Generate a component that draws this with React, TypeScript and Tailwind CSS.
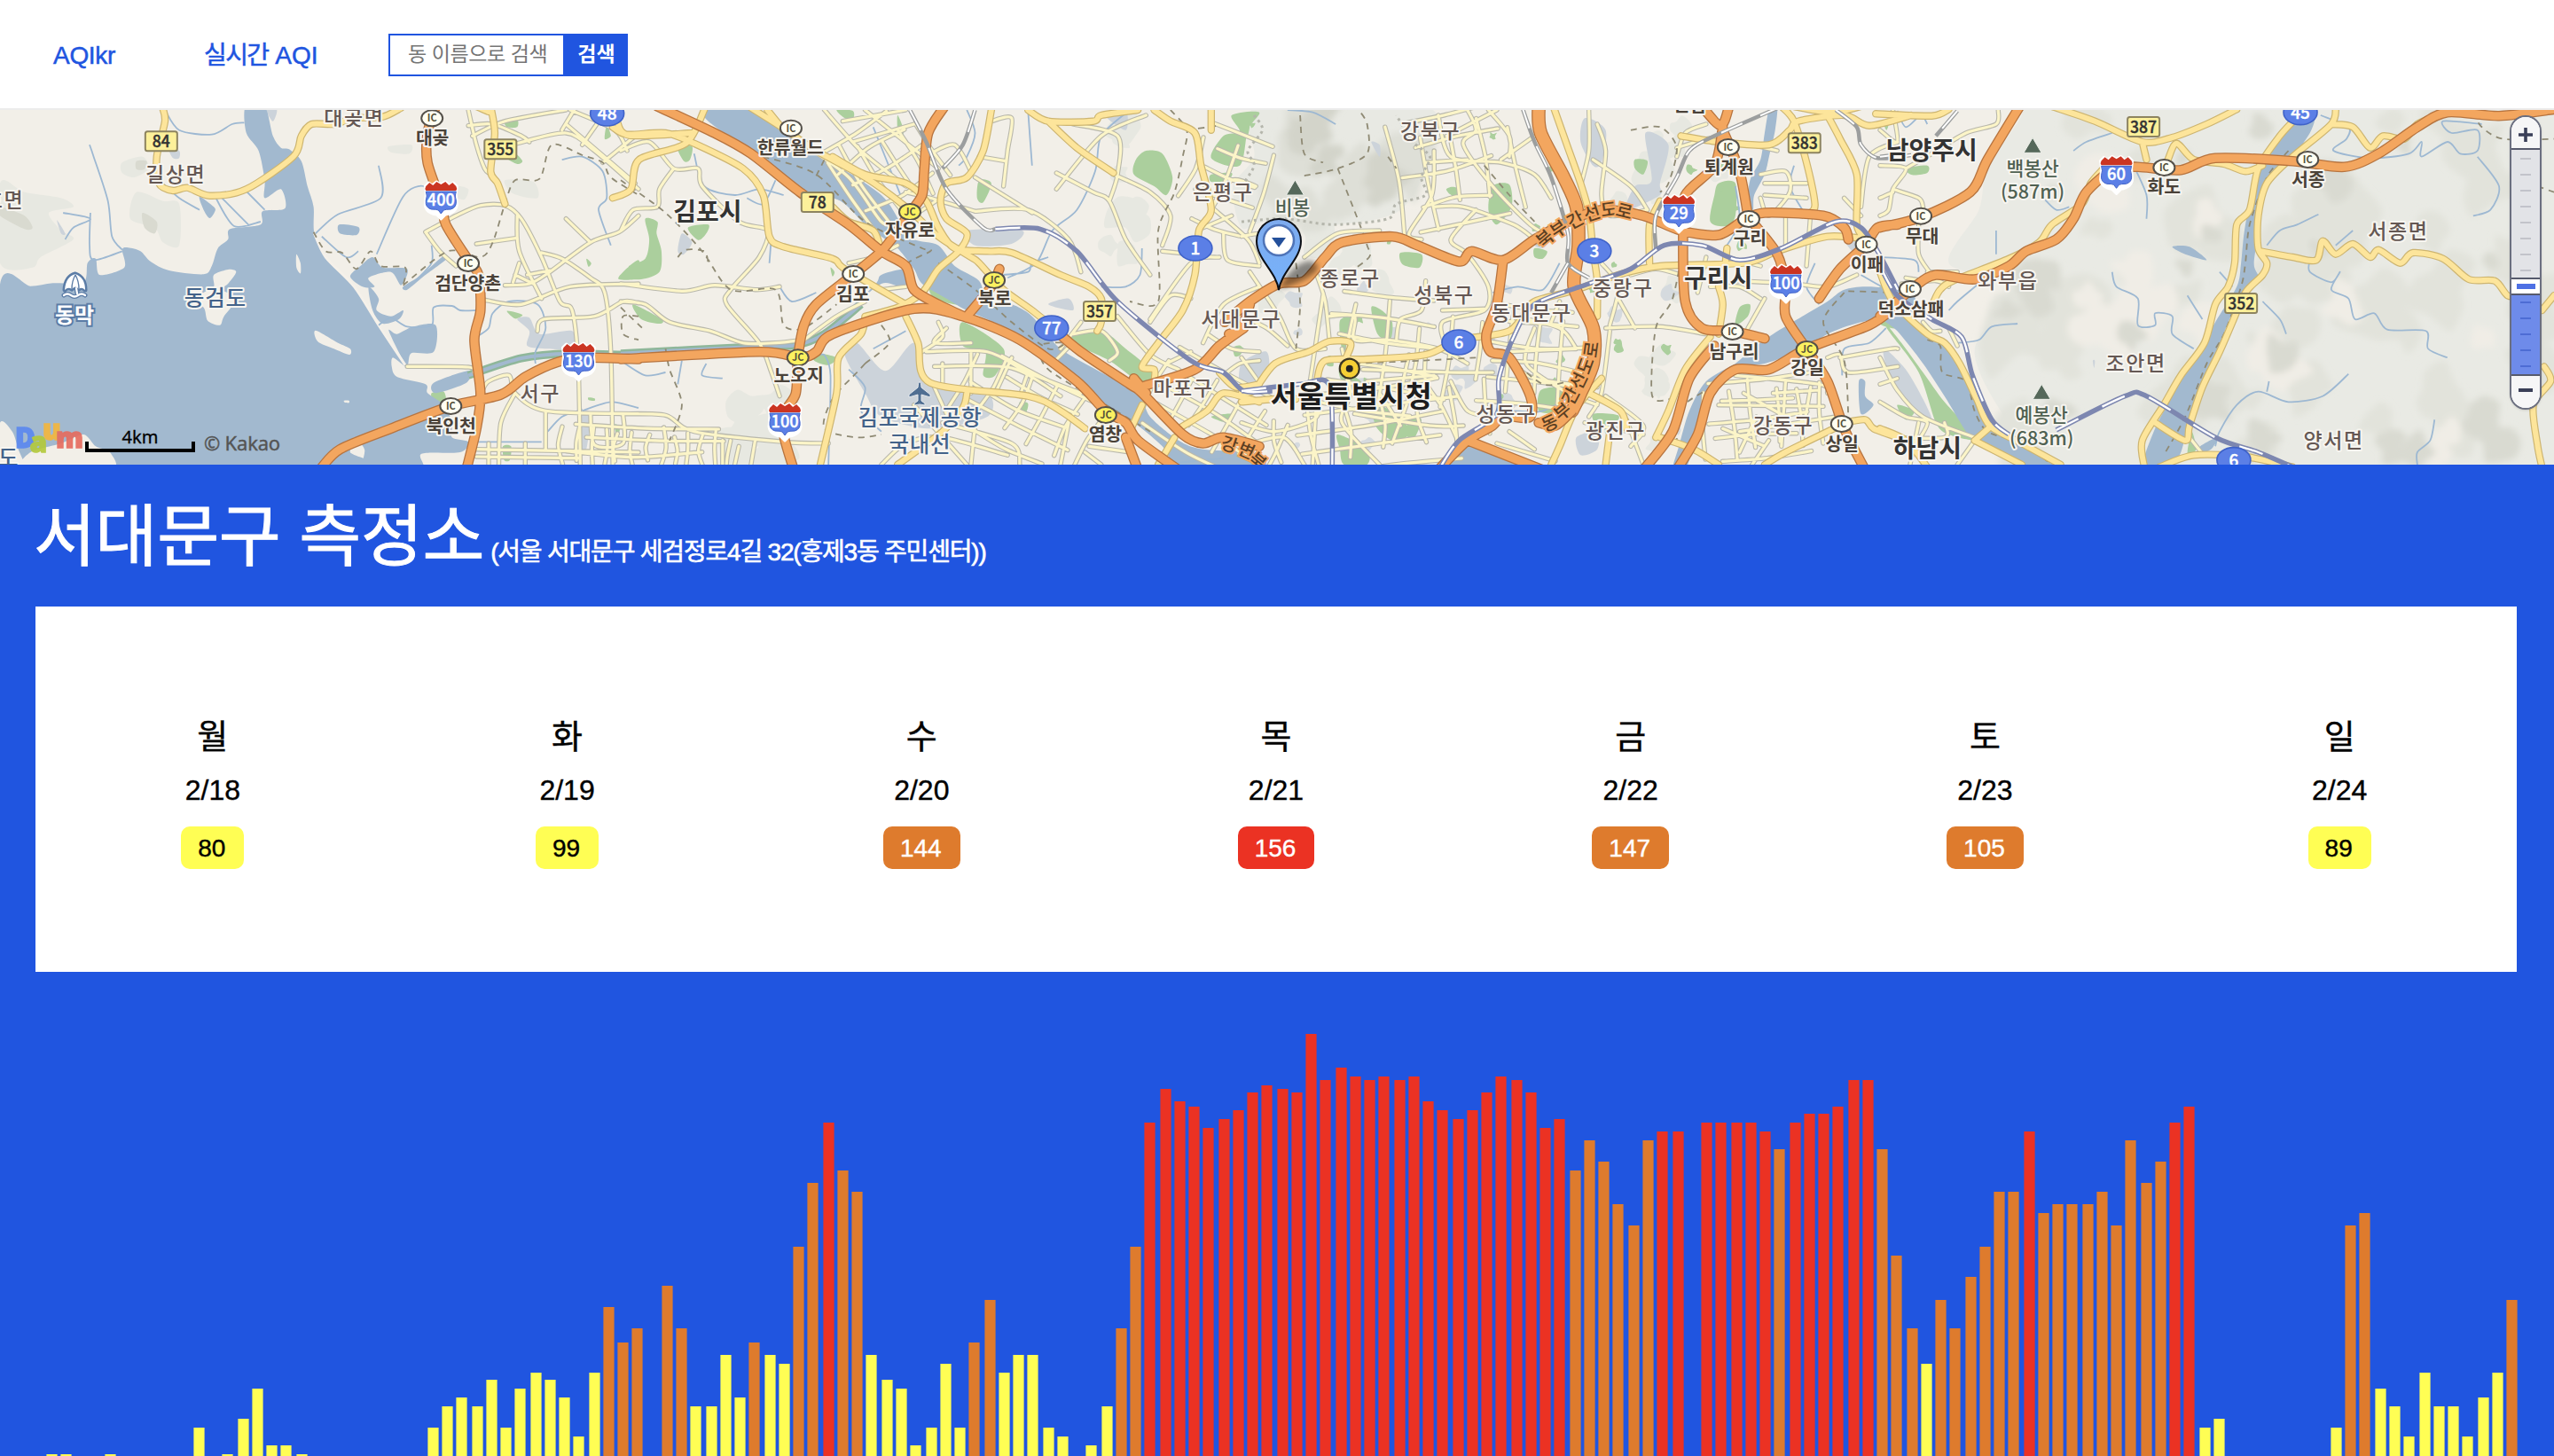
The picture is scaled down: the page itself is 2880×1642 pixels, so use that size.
import React from "react";

type Pt = [number, number];
type Tile = 0 | 1 | 2 | 3;

/* Survey sheets: horizontal origin and horizontal scale of each sheet on the map plane. */
const SHEETS: { x: number; s: number }[] = [
  { x: 0, s: 720 / 1568 },
  { x: 700, s: 720 / 1568 },
  { x: 1400, s: 740 / 1568 },
  { x: 2120, s: 760 / 1568 },
];

const px = (t: Tile, x: number) => SHEETS[t].x + x * SHEETS[t].s;
const py = (y: number) => 110 + y / 3;

const points = (t: Tile, src: string): Pt[] =>
  src
    .trim()
    .split(/\s+/)
    .map((p) => {
      const [x, y] = p.split(",").map(Number);
      return [px(t, x), py(y)] as Pt;
    });

const f = (n: number) => n.toFixed(1);

function curve(p: Pt[], closed = false): string {
  const n = p.length;
  const at = (i: number) => (closed ? p[(i + n) % n] : p[Math.max(0, Math.min(n - 1, i))]);
  let d = `M${f(p[0][0])} ${f(p[0][1])}`;
  for (let i = 0; i < (closed ? n : n - 1); i++) {
    const [a, b, c, e] = [at(i - 1), at(i), at(i + 1), at(i + 2)];
    d += `C${f(b[0] + (c[0] - a[0]) / 7)} ${f(b[1] + (c[1] - a[1]) / 7)} ${f(c[0] - (e[0] - b[0]) / 7)} ${f(
      c[1] - (e[1] - b[1]) / 7
    )} ${f(c[0])} ${f(c[1])}`;
  }
  return closed ? d + "Z" : d;
}

const line = (t: Tile, lines: string[]) => lines.map((l) => curve(points(t, l))).join("");
const area = (t: Tile, areas: string[]) => areas.map((a) => curve(points(t, a), true)).join("");

function rng(seed: number) {
  let s = seed;
  return () => {
    s = (s * 1664525 + 1013904223) % 4294967296;
    return s / 4294967296;
  };
}

function blobs(seed: number, count: number, x0: number, y0: number, x1: number, y1: number, r0: number, r1: number) {
  const r = rng(seed);
  let d = "";
  for (let i = 0; i < count; i++) {
    const cx = x0 + r() * (x1 - x0);
    const cy = y0 + r() * (y1 - y0);
    const rad = r0 + r() * (r1 - r0);
    const n = 9;
    const p: Pt[] = [];
    for (let k = 0; k < n; k++) {
      const q = rad * (0.45 + r() * 0.75);
      const a = (k / n) * Math.PI * 2;
      p.push([cx + Math.cos(a) * q, cy + Math.sin(a) * q]);
    }
    d += curve(p, true);
  }
  return d;
}

/* Irregular street lattice inside a rotated box. */
function lattice(cx: number, cy: number, w: number, h: number, deg: number, nx: number, ny: number, seed: number) {
  const r = rng(seed);
  const a = (deg * Math.PI) / 180;
  const at = (u: number, v: number): Pt => [
    cx + u * Math.cos(a) - v * Math.sin(a),
    cy + u * Math.sin(a) + v * Math.cos(a),
  ];
  let d = "";
  for (let i = 0; i <= nx; i++) {
    const u = -w / 2 + (w * i) / nx + (r() - 0.5) * 7;
    const s = -h / 2 + r() * h * 0.25;
    const e = h / 2 - r() * h * 0.25;
    d += curve([at(u, s), at(u + (r() - 0.5) * 9, (s + e) / 2), at(u + (r() - 0.5) * 9, e)]);
  }
  for (let j = 0; j <= ny; j++) {
    const v = -h / 2 + (h * j) / ny + (r() - 0.5) * 7;
    const s = -w / 2 + r() * w * 0.25;
    const e = w / 2 - r() * w * 0.25;
    d += curve([at(s, v), at((s + e) / 2, v + (r() - 0.5) * 9), at(e, v + (r() - 0.5) * 9)]);
  }
  return d;
}

const WATER =
  area(0, [
    "0,632 75,638 130,628 205,625 215,560 235,545 245,600 305,575 300,515 315,508 345,520 370,555 415,585 500,598 520,570 535,510 560,480 565,445 640,430 645,385 700,375 690,310 650,340 650,280 635,180 605,120 603,30 650,30 670,130 690,170 710,175 740,215 755,300 770,370 772,460 800,540 870,640 930,770 995,905 965,880 962,910 975,945 1045,970 1050,1000 1090,1040 1110,1100 1110,1150 1150,1165 1130,1200 1035,1205 1035,1260 900,1260 895,1190 870,1150 860,1200 880,1260 0,1260",
    "833,430 880,438 876,465 835,460",
    "490,335 525,370 528,385 515,408 500,380",
    "885,570 915,540 940,575 1000,580 985,635 960,590 905,610 920,640 890,640 860,605",
    "905,640 930,680 925,720 960,740 990,720 980,750 940,765 915,720",
    "1015,775 1070,770 1065,860 1010,865 998,905 955,790 975,800",
    "1065,965 1150,925 1145,965 1070,1000",
    "990,640 1035,600 1085,540 1095,548 1040,605 1000,650",
  ]) +
  area(1, [
    "205,30 215,80 320,180 400,260 460,320 540,350 600,430 640,470 680,510 720,580 740,630 800,680 850,720 960,790 1060,890 1140,970 1200,1050 1270,1110 1330,1180 1380,1260 1568,1260 1568,1205 1430,1190 1370,1160 1300,1080 1270,1000 1180,930 1080,850 1010,740 960,700 900,690 880,620 820,570 780,500 720,480 690,430 640,330 520,220 400,120 330,30",
    "640,600 700,580 720,610 690,640 640,630 560,720 500,790 620,640",
  ]) +
  area(2, [
    "490,1260 510,1190 550,1170 610,1190 720,1260",
    "1030,1260 1045,1180 1070,1060 1110,960 1180,900 1220,850 1270,800 1340,740 1400,690 1440,650 1500,640 1600,660 1600,730 1480,760 1400,800 1350,850 1250,900 1190,910 1140,970 1100,1100 1060,1260",
    "1262,30 1280,30 1275,110 1262,190 1250,260 1225,330 1222,380 1208,380 1215,280 1240,210 1250,120",
    "1475,960 1490,960 1490,1010 1510,1040 1480,1070",
  ]) +
  area(3, [
    "0,665 30,690 100,800 150,840 190,900 240,1020 250,1100 330,1180 420,1260 350,1260 260,1190 215,1160 150,1010 100,900 40,790 0,740",
    "960,80 1010,60 1000,120 950,220 900,300 885,420 870,560 880,610 850,660 810,760 790,850 760,960 720,1090 700,1200 670,1260 610,1260 640,1120 700,960 740,870 780,760 830,640 840,560 850,430 880,250 930,140",
    "745,1180 785,1150 770,1190 740,1205",
    "680,505 720,505 760,550 710,530",
  ]);

const ISLES = area(0, [
  "525,600 560,582 580,590 560,630 545,650 580,680 550,740 540,770 510,755 500,710 465,690 500,660 525,640",
  "775,788 830,830 860,850 858,870 820,850 780,825",
  "728,530 738,560 738,595 728,575",
  "0,1100 30,1130 45,1190 60,1260 -10,1260",
  "65,1250 75,1200 150,1170 205,1140 235,1180 270,1200 272,1260",
  "845,1025 857,1025 857,1033 846,1031",
]);

const STREAMS =
  line(0, [
    "220,160 230,200 265,350 275,470 300,515", "222,390 220,500 230,550 300,520", "155,390 222,410 180,440 160,480",
    "405,42 440,110 520,125 570,90 600,85", "400,290 440,340 490,380", "530,340 575,435 640,420", "545,340 610,430", "600,310 650,380",
    "775,460 830,395 935,340 930,230", "925,530 990,335 1040,300 1045,360", "790,470 850,540 880,520", "1060,500 1060,560 1020,620",
    "930,770 960,745 1000,775 1060,770 1065,710 1110,705 1130,720 1170,720", "1170,810 1200,780 1210,730 1250,690 1320,700 1340,780 1315,860 1315,900",
    "1380,210 1430,200 1480,250 1490,340 1470,380 1500,500", "1430,1060 1500,1030 1568,1050", "1345,1130 1380,1080 1430,1055", "1170,1165 1330,1165",
  ]) +
  line(1, [
    "180,190 205,300 280,330 340,310 400,330", "390,640 420,690 480,660", "500,870 515,940 510,1242", "440,860 500,870",
    "620,100 690,340", "850,42 870,120 850,200 830,230", "1010,230 1000,42", "1250,42 1180,130 1165,250 1120,380 1060,450 1020,560 950,610",
    "940,600 1000,590 1010,560 1050,540", "1280,510 1275,600 1240,640 1180,640", "0,890 60,940 110,930", "150,890 140,970", "210,900 200,940 250,950", "560,920 600,980 590,1060 640,1130",
    "620,850 700,790", "370,470 365,560", "310,340 350,360 380,280", "1340,1240 1480,1220",
  ]) +
  line(2, [
    "110,42 170,50 225,90", "650,1060 720,1060 800,1000", "1180,300 1190,420 1160,500", "1540,780 1500,830 1440,850 1435,940", "600,660 660,640 720,650 760,560", "1320,230 1310,300 1340,380", "1370,560 1350,640 1380,700",
    "1480,600 1530,640 1568,660",
  ]) +
  line(3, [
    "450,180 480,150 540,120", "590,230 620,330 620,410", "380,340 410,380 440,370", "1025,60 1090,100 1085,140 1055,180 1140,205 1230,190 1260,150 1260,200 1320,150 1350,190 1390,180 1390,110 1330,120 1310,80 1400,90",
    "1390,200 1440,300 1420,380 1380,400", "1020,395 970,430 930,450 900,500", "1100,450 1060,500", "1000,550 1000,590 1050,625 1070,590 1050,650 1090,680 1105,750 1150,730 1180,785 1270,790 1275,850 1320,880",
    "540,590 550,640 600,680 600,770 640,770 640,730 680,740 680,800 730,850", "890,690 930,750 945,800", "790,590 820,640", "320,765 260,775 230,820 180,830", "225,635 180,690 160,720",
    "1090,935 1030,1010 950,1030 880,995 830,1040 790,1130 780,1180", "905,960 900,995", "1290,1090 1280,1160 1250,1200 1250,1242", "270,450 270,530", "0,540 80,550 90,590", "40,45 60,100 95,60 110,90", "715,670 750,750",
  ]);

const PARKS =
  area(0, [
    "1240,80 1270,75 1270,100 1245,100", "1490,95 1500,130 1485,140", "1265,190 1283,215 1270,225 1245,205", "1530,590 1568,550 1568,610 1520,615", "1245,722 1283,735 1265,748",
    "1060,1000 1090,995 1095,1040 1065,1025", "1235,1180 1255,1180 1252,1226 1238,1226", "1510,1105 1522,1120 1515,1155", "1445,1015 1460,1018 1460,1026 1446,1024", "1440,545 1452,560 1445,572",
  ]) +
  area(1, [
    "60,410 90,420 88,460 100,520 95,590 50,615 0,610 30,590 20,570 60,545 70,480", "165,440 215,430 210,460 190,482", "140,170 175,165 170,210 155,215", "30,700 100,750 95,765 50,750", "840,760 940,850 920,940 890,940 895,860 840,840",
    "1100,820 1180,790 1240,850 1310,930 1300,960 1270,960 1200,890", "1290,180 1330,190 1355,270 1340,330 1310,300 1260,260 1265,210", "1500,60 1568,50 1540,110 1520,230 1450,205 1480,130 1520,115", "680,60 695,110 690,130 680,110", "880,280 910,290 890,355 875,340", "760,640 830,700 770,680",
    "480,865 530,880 510,905 475,890", "980,1030 1000,1035 995,1065 978,1060", "515,575 525,590 520,605", "1450,260 1500,255 1490,280 1450,285", "530,42 570,45 570,75 550,70", "1450,1080 1500,1070 1490,1100",
  ]) +
  area(2, [
    "0,60 20,70 15,130 0,140", "600,300 640,295 645,370 610,430 590,380", "1140,290 1180,290 1180,400 1160,435 1120,420 1130,330", "310,710 335,720 360,760 355,820 325,800", "235,755 265,750 260,840 240,850", "230,1140 300,1190 300,1242 245,1242 235,1190",
    "320,1040 380,1080 400,1140 360,1160 320,1110", "400,1080 430,1090 410,1160 395,1140", "715,990 770,985 750,1060 710,1060", "380,525 430,530 425,575 385,565", "940,210 970,215 960,260 940,240", "1190,710 1215,700 1210,740 1180,770", "1500,730 1568,740 1568,780 1530,770",
    "840,1070 900,1075 890,1110 850,1110", "1240,220 1255,230 1220,330 1215,300", "235,920 285,960 270,985 240,960", "700,510 730,520 720,545 700,540",
  ]) +
  area(3, [
    "0,740 50,830 100,930 150,1030 220,1140 220,1160 160,1140 130,1100 90,930 20,790", "700,960 715,960 705,1040 680,1060 680,1000", "60,240 110,230 110,255 75,262", "0,640 30,660 0,665", "725,1130 735,1190 715,1210", "6,80 20,85 15,110", "40,1040 80,1060 60,1090", "700,1060 710,1080 700,1120", "765,790 775,800 762,820",
  ]);

const GREY =
  area(1, ["580,830 650,925 720,830 760,960 900,1000 900,1080 760,1120 640,1080 600,1000 550,870", "850,450 985,450 960,495 870,500", "150,460 175,490 155,530 140,520", "1050,700 1100,680 1110,720", "1190,60 1240,42 1240,110", "1520,930 1568,890 1568,980 1530,985"]) +
  area(0, ["1325,800 1405,790 1410,850 1345,850 1295,840 1300,790 1270,750 1300,745", "415,175 440,180 440,205 425,205", "1430,1070 1450,1070 1440,1190 1425,1190", "140,415 160,460 150,460", "655,42 680,42 670,80"]) +
  area(2, ["965,120 1020,160 1000,290 1000,330 920,380 940,300 980,280", "820,70 870,110 860,220 840,230 810,150", "0,900 60,860 60,950 0,980", "310,150 330,160 330,200", "800,1150 850,1130 850,1190 810,1210", "700,460 740,470 720,510 690,490", "1430,460 1470,490 1460,520"]) +
  area(3, ["10,850 60,920 100,1020 120,1090 90,1080 50,1000 15,910", "495,890 500,890 498,915"]);

const STREETS =
  line(0, [
    "1045,455 1120,400 1180,365 1240,365 1280,410 1330,540 1375,690 1405,720 1420,900 1425,1242", "1045,455 1080,520 1120,570", "1170,495 1270,475", "1270,400 1275,520 1330,680", "1330,525 1380,545 1450,610 1485,660 1500,860 1505,1242",
    "1240,635 1300,630 1350,590 1450,490 1520,455 1568,400", "1260,625 1275,560", "1190,685 1280,700 1400,640 1568,630", "1320,790 1335,750 1460,740 1530,690 1568,695", "1000,910 1150,912 1165,930", "1185,990 1200,960 1250,940 1265,1000 1340,1060 1568,1070", "1265,1000 1230,1100 1225,1242",
    "1150,42 1170,160 1190,240 1205,260", "1160,130 1240,80 1390,42", "1270,155 1390,120 1460,180 1568,310", "1390,90 1560,290", "1380,110 1410,42", "1400,42 1510,110 1540,180", "1340,1065 1340,1190", "1150,95 1210,90 1280,130 1300,150", "1430,160 1490,42", "1390,410 1450,490", "1170,1190 1568,1200", "1170,1215 1420,1220", "1200,1170 1200,1242", "1290,1170 1290,1242",
    "1530,1070 1530,1170 1460,1175 1450,1070", "1560,130 1480,220", "1295,600 1350,585", "1265,600 1310,630",
  ]) +
  line(1, [
    "0,630 150,655 230,635 330,650 390,640", "0,180 70,150 130,240 190,240 200,300 290,420 360,450 340,540 270,650 260,700 340,830 370,930 390,1010", "130,240 95,310 90,370 30,380 0,450", "0,690 60,700 120,760 220,790 300,830 380,830 450,820",
    "0,1070 110,1075 180,1130 400,1165 510,1170", "450,820 530,740 600,690", "440,150 560,270 640,420 680,430", "500,42 590,180 700,300", "545,80 700,42", "700,320 760,340 870,385", "570,150 720,90", "600,42 780,240", "760,190 820,160 860,250", "870,385 1000,380 1100,480 1130,590",
    "870,270 1010,390", "880,200 945,215", "910,80 960,70 950,180 940,300", "1070,255 1160,320 1200,350 1240,480 1300,600", "1070,310 1180,130 1290,60", "1110,90 1220,130 1220,260 1200,350", "1210,260 1300,320 1350,400 1330,500", "780,760 790,810 740,860", "750,860 900,860 1000,930 1130,1000",
    "770,910 960,915 1080,1010", "790,900 790,980", "860,860 860,1000", "960,880 920,1000", "800,780 770,830 860,830", "1000,930 980,1010", "1300,750 1400,560 1470,540", "1220,740 1300,870 1370,920", "1300,760 1350,670 1400,680", "1110,800 1180,790 1220,860 1200,890", "1330,520 1400,530", "1430,830 1480,700 1568,640",
    "1440,800 1500,850 1568,860", "1450,370 1540,480 1568,560", "1430,440 1500,400", "1480,460 1490,550 1568,570", "1340,900 1400,860", "1480,940 1520,900 1568,890", "770,980 800,1070", "1080,850 1130,760", "1060,900 1110,830", "720,1040 850,1242", "790,1100 960,1170 980,1242", "1100,1100 1080,1242", "1140,1200 1180,1242", "1150,1180 1250,1200",
    "1560,300 1500,280 1450,380", "640,1242 700,1170 790,1150 950,1210", "870,1110 860,1242", "250,1160 250,1242", "330,1160 320,1242", "290,1180 280,1242", "560,560 620,540 680,500", "640,650 700,640",
  ]) +
  line(2, [
    "0,470 50,460 90,490", "20,590 90,740 130,850 200,850", "150,540 230,460 330,450", "180,600 200,690 210,820", "210,740 270,740 270,820 350,820 470,850 540,900", "0,740 60,780 110,840", "370,820 380,750 430,720 440,620", "470,60 500,200 620,220 700,260 740,340", "460,180 455,330 400,460 430,480",
    "540,42 560,110 530,160 600,300 690,430 740,470", "460,370 530,370 650,430 700,480", "440,220 540,210", "490,130 610,42", "590,42 640,130 640,200", "700,130 620,210", "850,90 870,180 860,330 880,400 970,380", "830,42 830,180 810,300", "840,210 930,300 970,380", "560,380 500,480 540,530 590,640 580,720 480,760 490,850",
    "480,720 580,715", "290,920 500,930 600,930", "300,960 460,940", "400,870 380,1000", "440,860 440,960 480,1050 520,1170", "240,850 260,1000 240,1100 330,1242", "330,1000 380,1110", "270,1070 450,1110 530,1110", "170,960 180,1080 80,1130 0,1100", "180,1000 170,1242", "410,980 360,1170", "0,1180 100,1150 150,1242", "500,960 540,1060 600,1080",
    "640,860 800,850", "700,780 680,900 780,1000 850,1040", "650,740 760,780 800,850", "870,780 1000,775 1110,800", "900,680 940,780", "860,560 900,640 880,770", "640,890 700,950 850,980", "880,790 860,1000 830,1080", "760,690 740,760", "820,1100 960,1140", "610,1170 750,1230", "640,1130 700,1190", "920,1090 960,1242", "870,1010 960,1110 930,1180",
    "1040,170 1110,140 1150,130", "1040,200 1060,120 1110,90", "1240,260 1300,250 1310,320 1260,400 1240,340", "1250,290 1350,290", "1250,330 1350,340", "1160,540 1240,570", "1180,620 1320,630 1400,640 1470,600", "1300,390 1300,500", "1360,390 1350,570", "1250,680 1210,780", "1120,640 1190,640 1240,680", "1140,1040 1390,1045", "1180,940 1380,970 1400,1000",
    "1270,1000 1380,990", "1300,960 1290,1180", "1360,980 1340,1140", "1190,1130 1420,1080", "1200,1000 1300,1080", "1400,880 1430,870 1450,930 1568,910", "1430,880 1550,850 1568,850", "1260,1160 1220,1242", "1230,1080 1190,1200", "1150,1120 1250,1180", "1480,370 1500,200 1568,150", "1440,340 1480,400", "1220,160 1280,180", "0,880 40,960", "930,600 990,580 1050,600", "1110,540 1090,660",
  ]) +
  line(3, [
    "0,400 20,380 30,310 60,240 0,230", "30,310 90,340 100,370", "90,430 90,530 115,590", "110,590 180,590", "50,630 130,620 160,640", "0,880 40,990 100,1080 220,1150", "0,1030 60,1080 110,1100 80,1180", "90,1100 70,1242", "220,1160 180,1242", "60,240 120,190 200,120 270,90 275,42", "0,110 40,150 30,42", "100,620 60,610", "0,340 30,320", "0,970 40,950", "30,1150 150,1150 150,1100", "160,780 180,840", "100,760 120,790 140,790", "720,1150 750,1205",
  ]) +
  lattice(730, 506, 190, 50, 2, 12, 3, 11) +
  lattice(1000, 192, 110, 110, 58, 4, 5, 5) +
  lattice(1560, 400, 150, 130, 8, 4, 5, 21) +
  lattice(1640, 190, 130, 130, -12, 4, 4, 31) +
  lattice(1560, 480, 240, 90, -8, 6, 4, 41) +
  lattice(1730, 400, 120, 110, 6, 4, 5, 51) +
  lattice(1385, 200, 80, 110, 20, 2, 4, 61) +
  lattice(1370, 470, 150, 90, 30, 5, 4, 71) +
  lattice(1160, 465, 160, 90, 28, 5, 4, 81) +
  lattice(1990, 470, 130, 90, -5, 5, 4, 91);

const YELLOW =
  line(0, [
    "398,30 405,80 385,200 390,290 425,315 460,305 515,332 605,310 720,200 740,130 765,90 820,90 870,70 940,65 985,35",
    "1205,30 1215,120 1205,250 1222,290 1240,360", "1170,30 1200,48", "1515,80 1545,128 1700,120",
  ]) +
  line(1, [
    "-20,100 15,125 110,120 180,155 300,240 350,330 365,470 400,505 520,545 550,580 700,700", "-20,340 25,310 45,210 160,155 205,42", "320,35 400,105 480,180 600,270 700,370 780,470 860,540 880,560 940,650 1010,720 1100,820", "360,42 400,110",
    "520,200 600,260 700,290 750,350 780,440 820,510 900,520 960,525 1080,600 1150,640 1180,680 1180,760 1170,790", "910,42 890,180 850,270 800,290 785,350 800,410 850,460 830,520 780,580 740,660 680,710 600,740", "1000,42 1050,80 1160,80 1180,60 1270,42", "1050,80 1120,170 1210,255",
    "1310,42 1350,80 1410,120 1425,230 1450,380 1420,450 1410,600 1380,720 1320,830 1280,910 1310,920 1310,960", "1450,42 1450,110", "600,740 590,800 535,880 530,1000 490,1242", "700,740 730,830 760,965 1000,1010 1080,1060 1140,1120", "850,1000 840,1050 790,1130 680,1242", "520,370 560,420 620,450 640,510 670,540",
    "1280,1040 1250,1130", "1370,1120 1440,1060 1480,1000 1568,1030", "1360,1150 1320,1242", "1470,930 1510,980 1568,970",
  ]) +
  line(2, [
    "0,1000 30,990 80,900 160,860 210,825 260,830 250,880", "180,960 200,890 300,885 440,870 520,820 640,790 690,700 720,680 800,650 900,600 1000,570 1200,560 1280,520 1400,470 1500,480", "745,30 780,170 810,290 830,390 840,520 850,620 850,740", "0,1030 80,1020 130,1020", "830,1000 905,1060 920,1120", "860,950 800,1050 760,1180 740,1242",
    "1120,810 1060,920 1020,1060 990,1150", "1000,1150 1080,1190 1140,1242", "1000,350 975,430 975,560", "1050,130 1140,150 1260,160 1310,110 1330,80 1440,60 1500,95 1600,60", "1290,30 1320,80 1350,220 1370,360 1360,390", "1400,60 1430,140 1470,260 1470,430 1490,480", "1320,30 1410,50 1480,30",
    "1430,1110 1300,1200 1250,1242", "1440,1100 1490,1090 1510,1120 1568,1150", "1140,640 1150,700 1140,800", "1160,510 1150,640", "880,1130 870,1242",
  ]) +
  line(3, [
    "-10,55 120,62 160,40", "400,30 500,80 610,150 680,135 760,90 830,40", "610,150 620,210", "670,210 690,155 730,210 800,225 850,250 890,230", "520,240 490,290 470,360 400,430 370,490 300,545 170,620 140,650 125,690", "0,590 30,690 110,800 150,830 185,900 225,1020 255,1110 330,1170 420,1242", "220,1160 330,1242", "220,1160 260,1110",
    "975,60 930,130 880,240 860,380 830,430 825,560 810,640 780,700 755,830 700,940 660,1040 610,1160 615,1250", "1060,30 1050,90 960,200 900,290 880,400 880,510 900,560 890,600 850,660 820,760 790,860 750,980 720,1110 710,1160 640,1100", "1050,90 1100,100 1140,170 1170,130 1220,140 1250,90 1300,60",
    "885,520 960,540 1015,550 1030,485 1060,530 1100,495 1140,540 1160,515 1210,560 1240,525 1310,545 1370,615 1430,620 1460,670 1490,670", "1540,720 1568,670", "1545,910 1560,960 1520,1040 1530,1180 1540,1250", "650,1250 730,1210 850,1215 960,1250", "0,1120 60,1160 110,1250",
  ]);

const EXPRESS = line(2, ["710,30 715,120 770,270 800,370 805,500 795,640 840,780 840,900 810,1000 790,1060"]);

const ORANGE =
  line(0, [
    "1070,30 1050,120 1050,220 1085,360 1095,430 1150,550 1175,600 1180,720 1165,820 1180,1000 1170,1120 1145,1260",
    "785,1260 835,1190 960,1120 1105,1045 1230,1005 1290,945 1370,895 1440,880 1568,885",
  ]) +
  line(1, [
    "0,885 340,860 440,880 480,860 520,800 720,715 840,740 980,820 1120,960 1190,1060 1240,1100 1270,1160 1370,1260",
    "90,30 230,120 320,190 440,320 560,430 640,520 700,570 720,650 780,700 850,745",
    "795,30 755,120 745,250 740,330 710,390 680,450 640,520 570,600 480,700 450,770 435,880 430,1000 405,1060 400,1140 425,1260",
    "930,580 910,640 850,740", "1240,1150 1270,1260", "1060,780 1130,860 1250,970 1280,1000 1380,1140 1430,1170 1480,1150 1568,1180", "1275,980 1410,920 1470,840 1530,780", "1260,950 1290,1000",
  ]) +
  line(2, [
    "-30,800 0,780 20,700", "-40,760 20,690 90,630 150,620 200,540 240,490 360,470 420,500 520,555 550,520 625,550 700,480 780,420 860,380 960,400 1050,450 1140,465 1200,415 1250,390 1390,400 1440,440 1450,480",
    "790,1060 750,1110 710,1100", "625,550 610,700 585,800 595,860 640,880 690,1010 690,1080 650,1080", "1100,30 1145,95 1165,30", "1150,100 1130,230 1060,330 1055,450 1060,690 1100,780 1170,790 1250,815", "1150,110 1190,250 1210,400", "1220,420 1280,530 1300,640 1300,740 1350,850 1400,960 1440,1120 1490,1260",
    "1568,430 1520,440 1490,500 1430,580 1380,680", "960,1260 1030,1130 1070,950 1130,840", "1040,1260 1090,1140 1120,1000 1180,920 1260,920 1350,850 1500,770 1560,710", "470,1260 540,1160 600,1110 620,1070", "540,1160 720,1260",
  ]) +
  line(3, [
    "0,440 95,405 210,320 250,210 325,30", "0,740 80,640 130,600 220,615 300,570 340,520 410,480 450,410 480,320 545,240 600,235 700,245 780,205 960,215 1080,235 1160,190 1250,100 1320,50 1440,62 1568,40",
  ]);

const RAIL =
  line(1, ["920,445 1030,445 1120,520 1220,690 1400,890 1480,930 1530,993 1600,993"]) +
  line(2, ["0,993 140,970 210,975 217,1260", "475,1250 520,1160 610,1070 615,950 650,810 700,700 830,630 930,580 1010,500 1100,500 1190,550 1290,510 1420,420 1480,440 1520,520 1568,650"]) +
  line(3, ["0,570 40,670 120,750 190,810 215,940 260,1090 300,1140", "410,1125 570,1010 620,1010 780,1150 880,1200 960,1250"]);

const RAIL_GREY =
  line(1, ["710,42 750,150 800,310 890,440 920,445", "870,42 840,160 790,240"]) +
  line(2, ["670,30 700,150 740,270 780,460 780,560 830,610", "780,560 740,660", "1290,30 1130,130 1070,180 1040,270 990,400 990,510", "1420,42 1470,100 1480,160 1520,205 1600,195"]) +
  line(3, ["0,200 60,190", "180,45 130,130"]);

const BORDER =
  line(0, ["770,455 800,520 840,525 875,580 910,520 935,570 995,575 990,635", "990,635 1100,520 1180,540 1210,490 1240,360 1265,280 1325,275 1355,160 1430,195 1480,220 1500,270 1568,330", "1568,740 1530,740 1530,800 1568,820"]) +
  line(1, [
    "0,280 110,390 200,520 270,650 380,650 400,770 450,780 530,700", "140,540 160,515 205,520 215,560", "350,200 480,260 600,420 740,510 760,520 700,570 720,680 640,740", "0,710 60,790", "110,850 120,920 150,1040 120,1160", "600,900 580,930 520,1020 500,1120 580,1150 640,1140", "640,770 660,830 600,900", "480,265 500,210",
    "780,560 880,660 960,760 1050,850 1090,830 1030,840 1050,920 1180,1030 1300,1130", "1350,42 1390,110 1380,200 1360,320 1320,450 1320,690 1250,690", "1390,110 1470,95",
  ]) +
  line(2, ["140,60 150,190 195,220", "150,265 230,240 300,190 300,90 280,42", "230,240 280,420 300,500 305,540 250,600", "130,560 140,700 130,850", "580,230 640,330 700,420", "930,110 1000,100 1040,170 1020,290 1000,320", "350,200 370,240", "1060,470 1030,680 990,780 980,1000 1010,1025 1050,1000", "1150,960 1050,1050 1040,1180", "1450,655 1568,660", "1440,660 1390,760 1440,890 1450,1080", "270,900 430,890 560,880", "640,880 720,970 780,960"]) +
  line(3, ["110,820 140,840 145,930 200,960 220,1060 250,1130 330,1170 400,1242", "950,180 900,270 860,430 850,560 840,640 800,800 760,900 710,1080 660,1210", "1380,50 1400,100 1450,140 1568,140", "1530,300 1568,320"]);

type Kind = "ward" | "city" | "ic" | "peak" | "sea" | "capital";
type Label = [Tile, number, number, string, Kind];

const LABELS: Label[] = [
  [0, 868, 68, "대곶면", "ward"], [0, 430, 260, "길상면", "ward"], [0, 8, 348, "흐면", "ward"], [0, 1062, 137, "대곶", "ic"], [0, 1149, 630, "검단양촌", "ic"],
  [0, 528, 680, "동검도", "sea"], [0, 1325, 1003, "서구", "ward"], [0, 1108, 1112, "북인천", "ic"], [0, 20, 1219, "도", "sea"],
  [1, 417, 172, "한류월드", "ic"], [1, 213, 388, "김포시", "city"], [1, 710, 449, "자유로", "ic"], [1, 570, 665, "김포", "ic"], [1, 918, 680, "북로", "ic"], [1, 437, 942, "노오지", "ic"],
  [1, 734, 1085, "김포국제공항", "sea"], [1, 734, 1175, "국내선", "sea"], [1, 1190, 1139, "염창", "ic"], [1, 1380, 985, "마포구", "ward"], [1, 1478, 320, "은평구", "ward"], [1, 1522, 750, "서대문구", "ward"],
  [2, 450, 113, "강북구", "ward"], [2, 122, 372, "비봉", "peak"], [2, 258, 612, "종로구", "ward"], [2, 482, 670, "성북구", "ward"], [2, 692, 730, "동대문구", "ward"], [2, 910, 645, "중랑구", "ward"],
  [2, 262, 1008, "서울특별시청", "capital"], [2, 631, 1070, "성동구", "ward"], [2, 892, 1127, "광진구", "ward"], [2, 1293, 1110, "강동구", "ward"], [2, 1435, 1172, "상일", "ic"], [2, 1352, 915, "강일", "ic"],
  [2, 1177, 860, "남구리", "ic"], [2, 1139, 613, "구리시", "city"], [2, 1215, 478, "구리", "ic"], [2, 1165, 236, "퇴계원", "ic"], [2, 1495, 566, "이패", "ic"], [2, 1070, 26, "진접", "ic"],
  [3, 120, 180, "남양주시", "city"], [3, 355, 240, "백봉산", "peak"], [3, 355, 318, "(587m)", "peak"], [3, 98, 470, "무대", "ic"], [3, 296, 620, "와부읍", "ward"], [3, 72, 716, "덕소삼패", "ic"], [3, 661, 304, "화도", "ic"], [3, 996, 278, "서종", "ic"],
  [3, 1204, 453, "서종면", "ward"], [3, 594, 900, "조안면", "ward"], [3, 376, 1075, "예봉산", "peak"], [3, 376, 1153, "(683m)", "peak"], [3, 1054, 1162, "양서면", "ward"], [3, 110, 1187, "하남시", "city"],
];

const LABEL_STYLE: Record<Kind, { size: number; fill: string; weight: number; gap: number }> = {
  ward: { size: 23, fill: "#655854", weight: 500, gap: 1.6 },
  ic: { size: 20.5, fill: "#4a4239", weight: 600, gap: -0.2 },
  city: { size: 28, fill: "#333", weight: 600, gap: 0 },
  peak: { size: 21.5, fill: "#4f6152", weight: 500, gap: 0 },
  sea: { size: 24.5, fill: "#43638a", weight: 500, gap: 0.8 },
  capital: { size: 32.5, fill: "#1d1d1d", weight: 600, gap: 0.5 },
};

const JUNCTIONS: [Tile, number, number, "IC" | "JC"][] = [
  [0, 1061, 70, "IC"], [0, 1150, 561, "IC"], [0, 1107, 1044, "IC"], [1, 418, 104, "IC"], [1, 710, 387, "JC"], [1, 571, 597, "IC"], [1, 917, 618, "JC"], [1, 435, 880, "JC"], [1, 1191, 1074, "JC"],
  [2, 1163, 168, "IC"], [2, 1212, 411, "IC"], [2, 1493, 497, "IC"], [2, 1173, 792, "IC"], [2, 1351, 852, "JC"], [2, 1434, 1104, "IC"], [3, 95, 401, "IC"], [3, 70, 648, "IC"], [3, 661, 237, "IC"], [3, 995, 210, "IC"],
];

const SHIELDS: [Tile, number, number, string][] = [
  [0, 1083, 336, "400"], [0, 1421, 882, "130"], [1, 403, 1086, "100"], [2, 1045, 381, "29"], [2, 1301, 618, "100"], [3, 550, 250, "60"],
];

const NATIONAL: [Tile, number, number, string][] = [
  [0, 1491, 54, "48"], [1, 1411, 510, "1"], [1, 1058, 780, "77"], [2, 843, 519, "3"], [2, 519, 828, "6"], [3, 978, 50, "45"], [3, 823, 1226, "6"],
];

const LOCAL: [Tile, number, number, string][] = [
  [0, 396, 148, "84"], [0, 1229, 175, "355"], [1, 483, 354, "78"], [1, 1176, 723, "357"], [2, 1345, 154, "383"], [3, 613, 99, "387"], [3, 840, 696, "352"],
];

const ROAD_NAMES: [number, number, number, string][] = [
  [1741, 268, -40, "북"], [1757, 257, -34, "부"], [1776, 247, -28, "간"], [1795, 239, -18, "선"], [1814, 235, -8, "도"], [1832, 237, 14, "로"],
  [1747, 476, -25, "동"], [1761, 463, -40, "부"], [1770, 446, -62, "간"], [1779, 429, -64, "선"], [1787, 412, -70, "도"], [1793, 394, -82, "로"],
  [1387, 500, 18, "강"], [1406, 507, 24, "변"], [1419, 519, 40, "북"],
];

const MAP_FONT = '"Noto Sans CJK KR", "Noto Sans", sans-serif';

function Casing({ d, w, fill, edge, rim = 2.4 }: { d: string; w: number; fill: string; edge: string; rim?: number }) {
  return (
    <g fill="none" strokeLinecap="round" strokeLinejoin="round">
      <path d={d} stroke={edge} strokeWidth={w + rim} />
      <path d={d} stroke={fill} strokeWidth={w} />
    </g>
  );
}

function Peak({ t, x, y }: { t: Tile; x: number; y: number }) {
  const cx = px(t, x);
  const cy = py(y);
  return <path d={`M${cx} ${cy - 9}l10 17h-20z`} fill="#55685a" stroke="#eef0ea" strokeWidth="1" />;
}

function MapArt() {
  return (
    <svg className="block h-[400px] w-full" viewBox="0 124 2880 400" preserveAspectRatio="none" fontFamily={MAP_FONT}>
      <defs>
        <linearGradient id="pin" x1="0" y1="0" x2="0" y2="1">
          <stop offset="0" stopColor="#7eabee" />
          <stop offset="1" stopColor="#76b2fb" />
        </linearGradient>
        <filter id="soft" x="-50%" y="-50%" width="200%" height="200%">
          <feGaussianBlur stdDeviation="3" />
        </filter>
        <filter id="relief" x="-5%" y="-10%" width="110%" height="120%">
          <feGaussianBlur stdDeviation="3.5" />
        </filter>
      </defs>
      <rect y="124" width="2880" height="400" fill="#f2efe8" />
      <path d={area(3, ["120,30 1600,30 1600,1260 420,1260 300,1100 220,860 300,640 160,560 230,380 250,230 330,30"])} fill="#e9eae4" />
      <path d={area(2, ["40,30 440,30 450,200 380,380 230,430 60,420 0,440 -20,300 30,200"])} fill="#e8e9e3" />
      <g fill="#e7e8e1">
        <path d={area(0, ["0,290 60,320 150,340 180,370 120,390 150,450 180,480 100,540 80,575 0,560", "335,320 400,350 440,360 440,500 400,490 380,440 320,410", "300,220 350,200 365,240 330,270 300,255", "955,165 1010,160 1005,190 960,185", "1120,300 1150,310 1140,345 1110,330", "1240,280 1310,285 1320,340 1260,325"])} />
        <path d={blobs(7, 9, 800, 440, 900, 520, 14, 34)} />
        <path d={blobs(17, 7, 1250, 130, 1330, 320, 10, 26)} />
        <path d={blobs(27, 8, 1390, 260, 1560, 360, 14, 30)} />
        <path d={blobs(37, 8, 1850, 300, 1900, 520, 10, 28)} />
        <path d={blobs(57, 7, 1820, 140, 1990, 260, 10, 26)} />
      </g>
      <g filter="url(#relief)">
        <path d={blobs(2, 42, 2260, 130, 2870, 520, 14, 52)} fill="#e2e3db" />
        <path d={blobs(3, 16, 2300, 130, 2800, 520, 14, 40)} fill="#f0ede6" />
        <path d={blobs(4, 24, 2260, 130, 2860, 520, 8, 28)} fill="#d9dad1" />
        <path d={blobs(5, 10, 1440, 130, 1590, 290, 14, 40)} fill="#dedfd7" />
        <path d={blobs(9, 6, 1460, 130, 1560, 230, 14, 34)} fill="#d3d4ca" />
      </g>
      <path d={area(0, ["0,370 60,400 80,440 60,445 0,400", "350,390 385,420 380,460 355,440", "335,215 360,215 355,242 335,242"])} fill="#d9dad0" />
      <path d={GREY} fill="#ccd3da" />
      <path d={blobs(77, 26, 1440, 320, 1900, 510, 4, 12)} fill="#d5dade" />
      <path d={PARKS} fill="#abcf9d" />
      <path d={blobs(78, 30, 1380, 140, 2080, 510, 3, 8)} fill="#abcf9d" />
      <path d={WATER} fill="#a2b9cf" />
      <path d={ISLES} fill="#f2efe8" />
      <path d={line(0, ["1150,940 1280,882 1400,866 1568,872"]) + line(1, ["0,866 340,842 430,838 500,800 590,700"])} fill="none" stroke="#8fb79a" strokeWidth="9" />
      <path d={line(0, ["1150,940 1280,882 1400,866 1568,872"]) + line(1, ["0,866 340,842 430,838 500,800 590,700"])} fill="none" stroke="#a2b9cf" strokeWidth="4" />
      <path d={line(0, ["772,460 800,540 870,640 930,770 995,905"])} fill="none" stroke="#f5f1ea" strokeWidth="3" />
      <path d={STREAMS} fill="none" stroke="#9db8d2" strokeWidth="1.8" strokeLinejoin="round" />
      <Casing d={STREETS} w={3.2} fill="#fcf5c8" edge="#b9b8ac" rim={2.2} />
      <path d={BORDER} fill="none" stroke="#8f8a74" strokeWidth="1.8" strokeDasharray="7 6" />
      <path
        d={line(2, ["30,60 50,110 15,180 30,230 0,300", "0,420 100,410 220,430 350,410 370,360 440,330 430,270 450,200 410,150 370,60"])}
        fill="none" stroke="#b5b6ac" strokeWidth="3" strokeDasharray="3 4"
      />
      <Casing d={YELLOW} w={6} fill="#fde59b" edge="#cdb571" />
      <Casing d={EXPRESS} w={13} fill="#f3a65f" edge="#b7743f" rim={2.6} />
      <Casing d={ORANGE} w={9} fill="#f3a65f" edge="#b7743f" rim={2.6} />
      <path d={EXPRESS} fill="none" stroke="#f3a65f" strokeWidth="12" />
      <g fill="none">
        <path d={RAIL_GREY} stroke="#9c9e9e" strokeWidth="4.5" />
        <path d={RAIL_GREY} stroke="#fff" strokeWidth="2" strokeDasharray="26 22" />
        <path d={RAIL} stroke="#7d87b0" strokeWidth="5.5" />
        <path d={RAIL} stroke="#fff" strokeWidth="2.4" strokeDasharray="28 30" />
      </g>

      {ROAD_NAMES.map(([x, y, a, s]) => (
        <text key={`${x}-${y}`} x={x} y={y} transform={`rotate(${a} ${x} ${y})`} fontSize="20" fontWeight="500" textAnchor="middle" dominantBaseline="central" fill="#5c4023" stroke="#f3a65f" strokeWidth="4" paintOrder="stroke">
          {s}
        </text>
      ))}

      {LOCAL.map(([t, x, y, s]) => (
        <g key={s} transform={`translate(${px(t, x)} ${py(y)})`}>
          <rect x="-18" y="-11" width="36" height="22" rx="2.5" fill="#fcf09a" stroke="#8d8460" strokeWidth="2" />
          <text y="6.5" fontSize="18.5" fontWeight="500" textAnchor="middle" fill="#333" stroke="#333" strokeWidth="0.4" textLength={s.length > 2 ? 30 : 20} lengthAdjust="spacingAndGlyphs">{s}</text>
        </g>
      ))}

      {NATIONAL.map(([t, x, y, s]) => (
        <g key={`${t}-${s}`} transform={`translate(${px(t, x)} ${py(y)})`}>
          <ellipse rx="19" ry="14" fill="#5b7fe6" stroke="#3f62c8" strokeWidth="1.6" />
          <text y="7" fontSize="19" fontWeight="500" textAnchor="middle" fill="#fff" stroke="#fff" strokeWidth="0.4">{s}</text>
        </g>
      ))}

      {SHIELDS.map(([t, x, y, s]) => (
        <g key={`${t}-${s}-${x}`} transform={`translate(${px(t, x)} ${py(y)})`}>
          <path d="M-18-12l4-4 4 3 5-4 5 3 5-3 5 4 4-3 4 4-1 9 1 12q-1 9-13 11l-5 5-5-5q-12-2-13-11l1-12z" fill="#fff" stroke="#fff" strokeWidth="3" strokeLinejoin="round" />
          <path d="M-18-9l1-3 4-4 4 3 4-4 5 3 5-3 4 4 4-3 4 4 1 3-1 2h-34z" fill="#cb3522" />
          <path d="M-17-6h34q-2 5 0 10 1 8-6 10-6 0-8 1l-3 4-3-4q-2-1-8-1-7-2-6-10 2-5 0-10z" fill="#5b7fe6" stroke="#3f62c8" strokeWidth="1" />
          <text y="10" fontSize="18.5" fontWeight="500" textAnchor="middle" fill="#fff" stroke="#fff" strokeWidth="0.4" textLength={s.length > 2 ? 31 : 21} lengthAdjust="spacingAndGlyphs">{s}</text>
        </g>
      ))}

      {JUNCTIONS.map(([t, x, y, s]) => (
        <g key={`${t}-${x}`} transform={`translate(${px(t, x)} ${py(y)})`}>
          <ellipse rx="12" ry="9" fill={s === "IC" ? "#fffef2" : "#fbf160"} stroke="#54504a" strokeWidth="2" />
          <text y="4" fontSize="11" fontWeight="700" textAnchor="middle" fill="#54503a">{s}</text>
        </g>
      ))}

      <Peak t={2} x={128} y={306} />
      <Peak t={3} x={355} y={163} />
      <Peak t={3} x={376} y={997} />

      {/* Beach parasol */}
      <g transform="translate(84 321)" fill="none" strokeLinejoin="round" strokeLinecap="round">
        <path d="M-11 6Q-10-9 1-12 12-8 12 6 8 2 5 5 1 0-3 5-7 2-11 6zM2 4L3 10M-12 12q4-3 8 0 4 3 8 0 4-3 8 0" stroke="#5b7ca6" strokeWidth="5" />
        <path d="M-11 6Q-10-9 1-12 12-8 12 6 8 2 5 5 1 0-3 5-7 2-11 6z" fill="#fff" />
        <path d="M1-11Q-3-4-3 5M1-11Q5-4 5 5" stroke="#5b7ca6" strokeWidth="1.4" />
        <path d="M2 4L3 10M-12 12q4-3 8 0 4 3 8 0 4-3 8 0" stroke="#fff" strokeWidth="2.2" />
      </g>
      <text x="84" y="353" fontSize="24" fontWeight="600" textAnchor="middle" dominantBaseline="central" fill="#fff" stroke="#5b7ca6" strokeWidth="4" paintOrder="stroke">동막</text>

      {/* Airport */}
      <path transform="translate(1037 443)" d="M0-13q2 2 2 7l10 8v3l-10-3v7l4 3v2l-6-1-6 1v-2l4-3v-7l-10 3v-3l10-8q0-5 2-7z" fill="#4f6e92" stroke="#e4e8ec" strokeWidth="1" />

      {LABELS.map(([t, x, y, s, kind]) => {
        const st = LABEL_STYLE[kind];
        return (
          <text
            key={`${t}-${x}-${y}`} x={px(t, x) + st.gap / 2} y={py(y) - 2} fontSize={st.size} fontWeight={st.weight} letterSpacing={st.gap}
            textAnchor="middle" dominantBaseline="central" fill={st.fill} stroke="#f7f5f0" strokeWidth="4" strokeLinejoin="round" paintOrder="stroke"
          >
            {s}
          </text>
        );
      })}

      {/* City hall marker */}
      <ellipse cx={px(2, 258)} cy={py(917)} rx="11" ry="11" fill="#f5cf35" stroke="#3a3524" strokeWidth="2.2" />
      <circle cx={px(2, 258)} cy={py(917)} r="4" fill="#222" />

      {/* Location pin */}
      <path d="M1442 326q14-28 34-32 16 4 6 14-16 12-40 18z" fill="#000" opacity="0.45" filter="url(#soft)" />
      <path d="M1442 327C1439 306 1417 292 1417 272A25 25 0 0 1 1467 272C1467 292 1445 306 1442 327z" fill="url(#pin)" stroke="#0c0f16" strokeWidth="2" />
      <circle cx="1442" cy="271" r="17" fill="#fff" stroke="#4f74b8" strokeWidth="2.5" />
      <path d="M1434 268h16l-8 11z" fill="#24509b" />
    </svg>
  );
}

function ZoomControl() {
  const ticks = (n: number, cls: string) =>
    Array.from({ length: n }, (_, i) => <div key={i} className={`h-[2px] w-3 shrink-0 ${cls}`} />);
  return (
    <div className="absolute left-[2830px] top-[6px] flex h-[332px] w-[36px] flex-col overflow-hidden rounded-full border-2 border-[#6b6f80] bg-white shadow">
      <div className="flex h-[37px] items-center justify-center border-b-2 border-[#565a6c] bg-[#f6f6f7]">
        <svg viewBox="0 0 16 16" className="mt-1 size-4"><path d="M0 8h16M8 0v16" stroke="#3a3f58" strokeWidth="3.6" /></svg>
      </div>
      <div className="flex h-[144px] flex-col items-center gap-4 bg-[#e2e3e7] pt-[9px]">{ticks(8, "bg-[#c2c3ca]")}</div>
      <div className="flex h-[20px] shrink-0 items-center justify-center border-y-2 border-[#565a6c] bg-white">
        <div className="h-[6px] w-[21px] bg-[#4e70e4]" />
      </div>
      <div className="flex h-[89px] flex-col items-center gap-4 bg-[#6e8bea] pt-[7px]">{ticks(5, "bg-[#4d6cd4]")}</div>
      <div className="flex flex-1 items-center justify-center border-t-2 border-[#565a6c] bg-[#f6f6f7]">
        <div className="mb-1 h-[4px] w-4 bg-[#3a3f58]" />
      </div>
    </div>
  );
}

function DaumLogo() {
  return (
    <div className="flex h-[36px] w-[70px] text-[31px] leading-none font-black opacity-90 [-webkit-text-stroke:1.5px_currentColor]">
      <span className="text-[#5a88f0]">D</span>
      <span className="-ml-[6px] mt-[5px] text-[#b3c93a]">a</span>
      <span className="-ml-[5px] -mt-[9px] text-[#f5b63c]">u</span>
      <span className="-ml-[6px] text-[#e66b5d]">m</span>
    </div>
  );
}

function MapPanel() {
  return (
    <div className="relative h-[400px] overflow-hidden">
      <MapArt />
      <div className='absolute bottom-[10px] left-[17px] flex items-end font-["Noto_Sans"]'>
        <DaumLogo />
        <div className="mb-[4px] ml-[9px] flex h-[12px] w-[124px] items-end justify-center border-4 border-t-0 border-black">
          <span className="mb-0 text-[20px] leading-[26px] text-black [-webkit-text-stroke:0.3px]">4km</span>
        </div>
        <span className="ml-[10px] text-[22px] leading-[30px] tracking-[-0.2px] text-[#555] [-webkit-text-stroke:0.4px]">© Kakao</span>
      </div>
      <ZoomControl />
    </div>
  );
}

function Header() {
  return (
    <header className="flex h-[124px] items-center border-b-2 border-[#ececec] bg-white pl-[60px] text-[28px] text-[#2055e0]">
      <a className="w-[170px] pt-[3px] tracking-[-0.3px] [-webkit-text-stroke:0.5px]">AQIkr</a>
      <a className="w-[208px] pt-[3px] [-webkit-text-stroke:0.5px]"><span className="tracking-[-1.6px]">실시간</span> AQI</a>
      <form className="mt-px flex h-[48px] w-[270px] text-[23px]">
        <div className="flex w-[199px] items-center whitespace-nowrap border-2 border-[#2055e0] pl-[20px] tracking-[-0.4px] text-[#757575]">동 이름으로 검색</div>
        <div className="flex flex-1 items-center justify-center bg-[#2055e0] font-bold text-white">검색</div>
      </form>
    </header>
  );
}

const WEEK = [
  { day: "월", date: "2/18", aqi: 80 },
  { day: "화", date: "2/19", aqi: 99 },
  { day: "수", date: "2/20", aqi: 144 },
  { day: "목", date: "2/21", aqi: 156 },
  { day: "금", date: "2/22", aqi: 147 },
  { day: "토", date: "2/23", aqi: 105 },
  { day: "일", date: "2/24", aqi: 89 },
];

const badge = (aqi: number) =>
  aqi > 150 ? "bg-[#eb3223] text-white" : aqi > 100 ? "bg-[#de7b2d] text-white" : "bg-[#fffe54] text-black";

function WeekCard() {
  return (
    <div className="mx-10 mr-[42px] grid h-[412px] grid-cols-7 bg-white text-black">
      {WEEK.map((d) => (
        <div key={d.date} className="flex flex-col items-center pt-[124px] [-webkit-text-stroke:0.4px]">
          <div className="text-[38px] leading-[46px]">{d.day}</div>
          <div className="mt-[18px] text-[32px] leading-[38px]">{d.date}</div>
          <div className={`mt-[22px] flex h-12 items-center rounded-[10px] pl-[19px] pr-[21px] pt-px text-[28px] ${badge(d.aqi)}`}>{d.aqi}</div>
        </div>
      ))}
    </div>
  );
}

/* Visible bar heights, one per hour; 0 marks an hour without a visible reading. */
const HOURS = [
  2, 2, 0, 0, 2, 0, 0, 0, 0, 0, 32, 0, 2, 42, 76, 12, 12, 2, 0, 0, 0, 0, 0, 0, 0, 0, 32, 56, 66, 56, 86, 32, 76, 94, 86, 66, 22, 94,
  168, 128, 144, 0, 192, 144, 56, 56, 114, 66, 128, 114, 104, 236, 308, 376, 322, 298, 114, 86, 76, 12, 32, 104, 32, 128, 176, 94,
  114, 114, 32, 22, 0, 12, 56, 144, 236, 376, 414, 400, 394, 370, 380, 390, 410, 418, 414, 410, 476, 424, 438, 428, 424, 428, 424,
  428, 400, 390, 380, 390, 410, 428, 424, 410, 370, 380, 322, 356, 332, 284, 260, 356, 366, 366, 0, 376, 376, 376, 376, 366, 346,
  376, 386, 386, 394, 424, 424, 346, 226, 144, 104, 176, 144, 202, 236, 298, 298, 366, 274, 284, 284, 284, 298, 260, 356, 308, 332,
  376, 394, 32, 42, 0, 0, 0, 0, 0, 0, 0, 32, 260, 274, 76, 56, 22, 94, 56, 56, 22, 66, 94, 176,
];

const slotX = (i: number) => 2 * Math.round((52.4 + 16.51 * i) / 2);
const barColor = (h: number) =>
  h >= 366
    ? "bg-[#eb3223] border-[#eb3223]/60"
    : h >= 128
      ? "bg-[#de7b2d] border-[#de7b2d]/60"
      : "bg-[#fffe54] border-[#fffe54]/60";

function HourChart() {
  return (
    <div className="flex h-[546px] items-end pl-[52px]">
      {HOURS.map((h, i) => (
        <div key={i} className="shrink-0" style={{ width: slotX(i + 1) - slotX(i) }}>
          <div className={`w-[13px] border-x bg-clip-padding ${h ? barColor(h) : "border-transparent"}`} style={{ height: h }} />
        </div>
      ))}
    </div>
  );
}

export default function App() {
  return (
    <div className='h-[1642px] w-[2880px] overflow-hidden bg-[#2055e0] font-["Liberation_Sans","Noto_Sans_CJK_KR",sans-serif]'>
      <Header />
      <MapPanel />
      <div className="flex h-[160px] items-baseline pl-[38px] pt-[27px] text-white">
        <h1 className="text-[76px] leading-[110px] tracking-[-0.3px] [-webkit-text-stroke:1px]">서대문구 측정소</h1>
        <span className="ml-[7px] text-[28px] tracking-[-1.2px] [-webkit-text-stroke:0.6px]">(서울 서대문구 세검정로4길 32(홍제3동 주민센터))</span>
      </div>
      <WeekCard />
      <HourChart />
    </div>
  );
}
